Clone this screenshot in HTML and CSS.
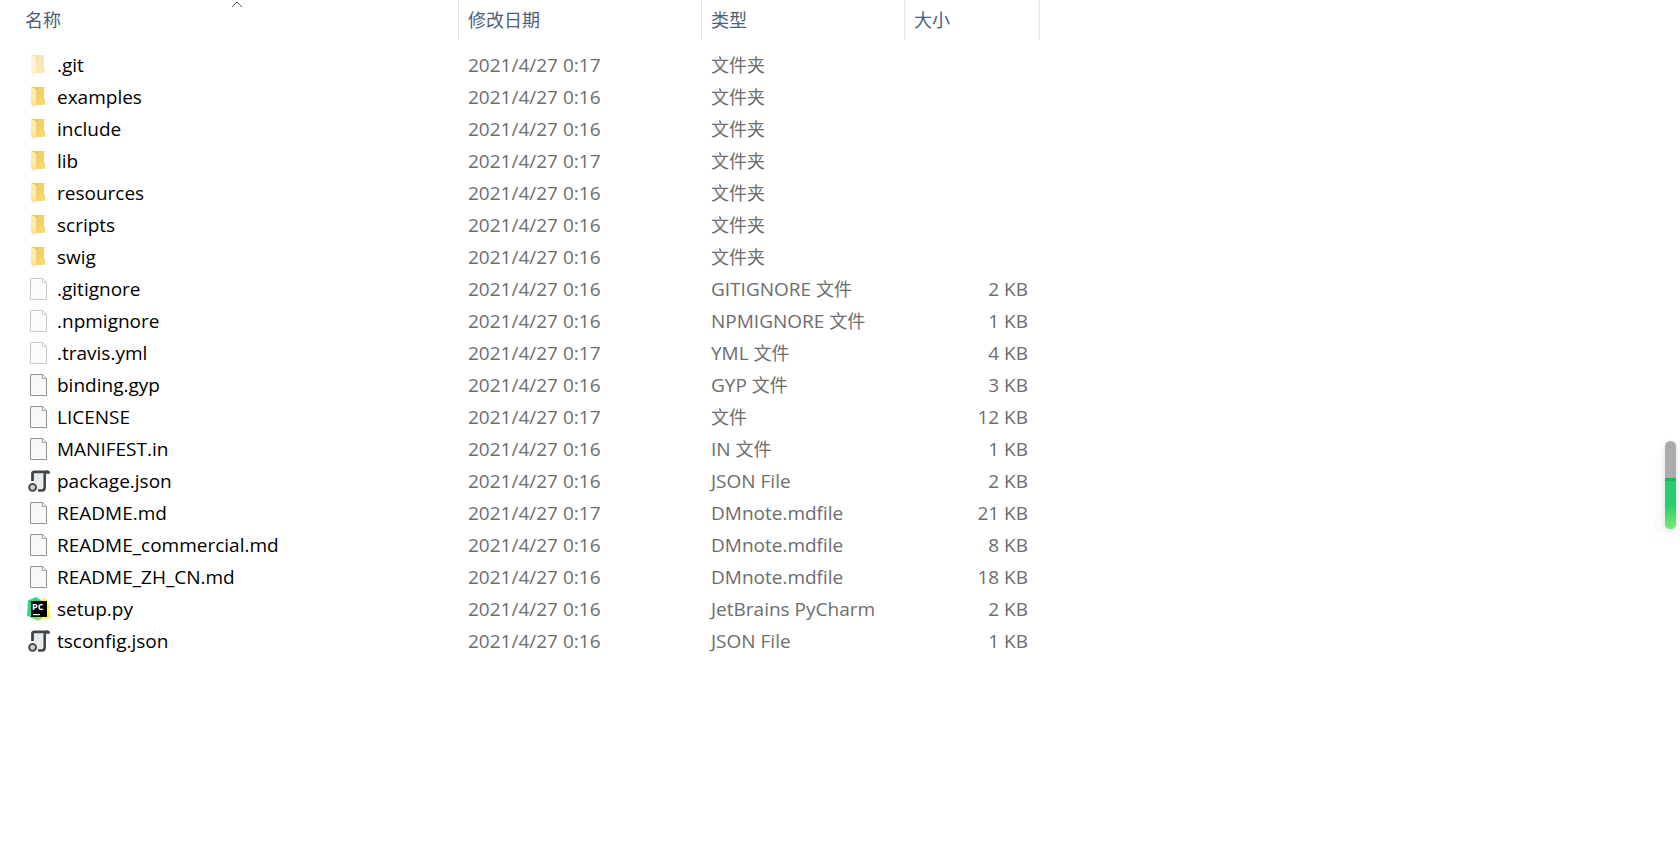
FILE: index.html
```html
<!DOCTYPE html>
<html lang="zh-CN">
<head>
<meta charset="utf-8">
<title>文件列表</title>
<link rel="stylesheet" href="styles.css">
</head>
<body>
<svg class="sprite" aria-hidden="true">
  <defs>
    <linearGradient id="folder-back" x1="0" y1="0" x2="1" y2="1">
      <stop offset="0" stop-color="#e6c460"/><stop offset="1" stop-color="#fddb7a"/>
    </linearGradient>
    <linearGradient id="folder-front" x1="0" y1="0" x2="0" y2="1">
      <stop offset="0" stop-color="#ffedb4"/><stop offset="1" stop-color="#ffe49a"/>
    </linearGradient>
    <linearGradient id="paper" x1="0" y1="0" x2="1" y2="1">
      <stop offset="0" stop-color="#f2f4f5"/><stop offset="1" stop-color="#fcfdfd"/>
    </linearGradient>
    <linearGradient id="py-green" x1="0" y1="0" x2="0.6" y2="1">
      <stop offset="0" stop-color="#21d789"/><stop offset="0.6" stop-color="#2bd98a"/><stop offset="1" stop-color="#8be46a"/>
    </linearGradient>
    <symbol id="folder" viewBox="0 0 24 24">
      <path d="M4 2h13v11l1 1.500V20H8L4 18z" fill="url(#folder-back)"/>
      <path d="M4 2l5 2.500V19l-1 1v3l-4-3z" fill="url(#folder-front)"/>
    </symbol>
    <symbol id="file" viewBox="0 0 24 24">
      <path d="M3.500 1.500h12l4 4v17h-16z" fill="url(#paper)" stroke="#929292"/>
      <path d="M15.500 1.500v4h4z" fill="#fff" stroke="#a2a2a2"/>
    </symbol>
    <symbol id="json" viewBox="0 0 24 24">
      <path d="M6 3h12v16l-2 2H8z" fill="#e9ebed"/>
      <path d="M5.500 12V4.500Q5.500 2.800 7.500 2.800H21" fill="none" stroke="#45484b" stroke-width="2.800"/>
      <path d="M18.500 1.400H21q2 0 2 3.400h-5z" fill="#45484b"/>
      <path d="M17.700 4v14.500q0 3-3 3H11" fill="none" stroke="#45484b" stroke-width="2.600"/>
      <circle cx="5.600" cy="18.400" r="3.400" fill="#e3e5e7" stroke="#45484b" stroke-width="2"/>
      <circle cx="5.600" cy="18.400" r="1.500" fill="#c4c7c9"/>
    </symbol>
    <symbol id="pycharm" viewBox="0 0 24 24">
      <path d="M14 3l4-2 2 2v3l3 2-1 5 2 8-8 1-8 1z" fill="#fcf84a"/>
      <path d="M1 3.500L9 0l6 4v17l-4 3-8-4-3-1z" fill="url(#py-green)"/>
      <path d="M4 4h16v16H4z" fill="#050505"/>
      <path d="M6 17h7v1.200H6z" fill="#fff"/>
      <text x="5" y="13" class="pc">PC</text>
    </symbol>
  </defs>
</svg>

<main class="explorer">
  <table class="files">
    <colgroup><col class="c-name"><col class="c-date"><col class="c-type"><col class="c-size"></colgroup>
    <thead>
      <tr>
        <th aria-sort="ascending"><button type="button" class="sort">名称<svg class="chevron" viewBox="0 0 12 7" aria-hidden="true"><path d="M1 6l5-5 5 5"/></svg></button></th>
        <th><button type="button" class="sort">修改日期</button></th>
        <th><button type="button" class="sort">类型</button></th>
        <th><button type="button" class="sort">大小</button></th>
      </tr>
    </thead>
    <tbody>
      <tr><td><div class="name"><svg class="icon hidden"><use href="#folder"/></svg>.git</div></td><td>2021/4/27 0:17</td><td><span class="zh">文件夹</span></td><td></td></tr>
      <tr><td><div class="name"><svg class="icon"><use href="#folder"/></svg>examples</div></td><td>2021/4/27 0:16</td><td><span class="zh">文件夹</span></td><td></td></tr>
      <tr><td><div class="name"><svg class="icon"><use href="#folder"/></svg>include</div></td><td>2021/4/27 0:16</td><td><span class="zh">文件夹</span></td><td></td></tr>
      <tr><td><div class="name"><svg class="icon"><use href="#folder"/></svg>lib</div></td><td>2021/4/27 0:17</td><td><span class="zh">文件夹</span></td><td></td></tr>
      <tr><td><div class="name"><svg class="icon"><use href="#folder"/></svg>resources</div></td><td>2021/4/27 0:16</td><td><span class="zh">文件夹</span></td><td></td></tr>
      <tr><td><div class="name"><svg class="icon"><use href="#folder"/></svg>scripts</div></td><td>2021/4/27 0:16</td><td><span class="zh">文件夹</span></td><td></td></tr>
      <tr><td><div class="name"><svg class="icon"><use href="#folder"/></svg>swig</div></td><td>2021/4/27 0:16</td><td><span class="zh">文件夹</span></td><td></td></tr>
      <tr><td><div class="name"><svg class="icon hidden"><use href="#file"/></svg>.gitignore</div></td><td>2021/4/27 0:16</td><td>GITIGNORE <span class="zh">文件</span></td><td>2 KB</td></tr>
      <tr><td><div class="name"><svg class="icon hidden"><use href="#file"/></svg>.npmignore</div></td><td>2021/4/27 0:16</td><td>NPMIGNORE <span class="zh">文件</span></td><td>1 KB</td></tr>
      <tr><td><div class="name"><svg class="icon hidden"><use href="#file"/></svg>.travis.yml</div></td><td>2021/4/27 0:17</td><td>YML <span class="zh">文件</span></td><td>4 KB</td></tr>
      <tr><td><div class="name"><svg class="icon"><use href="#file"/></svg>binding.gyp</div></td><td>2021/4/27 0:16</td><td>GYP <span class="zh">文件</span></td><td>3 KB</td></tr>
      <tr><td><div class="name"><svg class="icon"><use href="#file"/></svg>LICENSE</div></td><td>2021/4/27 0:17</td><td><span class="zh">文件</span></td><td>12 KB</td></tr>
      <tr><td><div class="name"><svg class="icon"><use href="#file"/></svg>MANIFEST.in</div></td><td>2021/4/27 0:16</td><td>IN <span class="zh">文件</span></td><td>1 KB</td></tr>
      <tr><td><div class="name"><svg class="icon"><use href="#json"/></svg>package.json</div></td><td>2021/4/27 0:16</td><td>JSON File</td><td>2 KB</td></tr>
      <tr><td><div class="name"><svg class="icon"><use href="#file"/></svg>README.md</div></td><td>2021/4/27 0:17</td><td>DMnote.mdfile</td><td>21 KB</td></tr>
      <tr><td><div class="name"><svg class="icon"><use href="#file"/></svg>README_commercial.md</div></td><td>2021/4/27 0:16</td><td>DMnote.mdfile</td><td>8 KB</td></tr>
      <tr><td><div class="name"><svg class="icon"><use href="#file"/></svg>README_ZH_CN.md</div></td><td>2021/4/27 0:16</td><td>DMnote.mdfile</td><td>18 KB</td></tr>
      <tr><td><div class="name"><svg class="icon"><use href="#pycharm"/></svg>setup.py</div></td><td>2021/4/27 0:16</td><td>JetBrains PyCharm</td><td>2 KB</td></tr>
      <tr><td><div class="name"><svg class="icon"><use href="#json"/></svg>tsconfig.json</div></td><td>2021/4/27 0:16</td><td>JSON File</td><td>1 KB</td></tr>
    </tbody>
  </table>
</main>
<aside class="gauge"><div class="gauge-bar"><div class="gauge-fill"></div></div></aside>
</body>
</html>
```

FILE: styles.css
```css
body {
  margin: 0;
  min-height: 100vh;
  position: relative;
  background: #fff;
  color: #6d6d6d;
  font: 19px/32px "Open Sans", "Noto Sans CJK SC", sans-serif;
}

.sprite {
  position: absolute;
  width: 0;
  height: 0;
}

.explorer {
  padding-left: 16px;
}

.files {
  table-layout: fixed;
  width: 1024px;
  border-collapse: separate;
  border-spacing: 0;
}

.c-name { width: 443px; }
.c-date { width: 243px; }
.c-type { width: 203px; }
.c-size { width: 135px; }

.files th {
  height: 40px;
  padding: 0;
  border-right: 1px solid #e5e5e5;
}

.sort {
  position: relative;
  display: block;
  width: 100%;
  height: 40px;
  padding: 0 9px 2px;
  border: 0;
  background: none;
  color: #4c607a;
  font: 18px/38px "Noto Sans CJK SC", sans-serif;
  text-align: left;
}

.chevron {
  position: absolute;
  top: 1px;
  left: 50%;
  width: 12px;
  height: 7px;
  margin-left: -6px;
  fill: none;
  stroke: #555;
}

/* Space between the header and the first row */
.files tbody::before {
  content: "";
  display: block;
  height: 9px;
}

.files td {
  height: 32px;
  padding: 0 9px;
  white-space: nowrap;
}

.files td:last-child {
  padding-right: 12px;
  text-align: right;
}

.zh {
  font-size: 18px;
  line-height: 1;
}

.name {
  display: flex;
  align-items: center;
  gap: 6px;
  margin-left: 2px;
  color: #000;
}

.icon {
  flex: none;
  width: 24px;
  height: 24px;
}

.hidden {
  opacity: 0.5;
}

.pc {
  fill: #fff;
  font: bold 9px "Open Sans", sans-serif;
}

.gauge {
  position: absolute;
  top: 440px;
  right: 0;
  padding: 1px 4px 16px 10px;
  background: linear-gradient(#fefefe, #fafafa 80%, #fefefe);
}

.gauge-bar {
  display: flex;
  align-items: flex-end;
  width: 11px;
  height: 88px;
  border-radius: 6px;
  overflow: hidden;
  background: #ababab;
  box-shadow: 0 2px 6px #0000001f;
}

.gauge-fill {
  width: 100%;
  height: 51px;
  box-sizing: border-box;
  border-top: 3px solid #22b35f;
  background: linear-gradient(#27ce6b 50%, #7bea73);
}
```
